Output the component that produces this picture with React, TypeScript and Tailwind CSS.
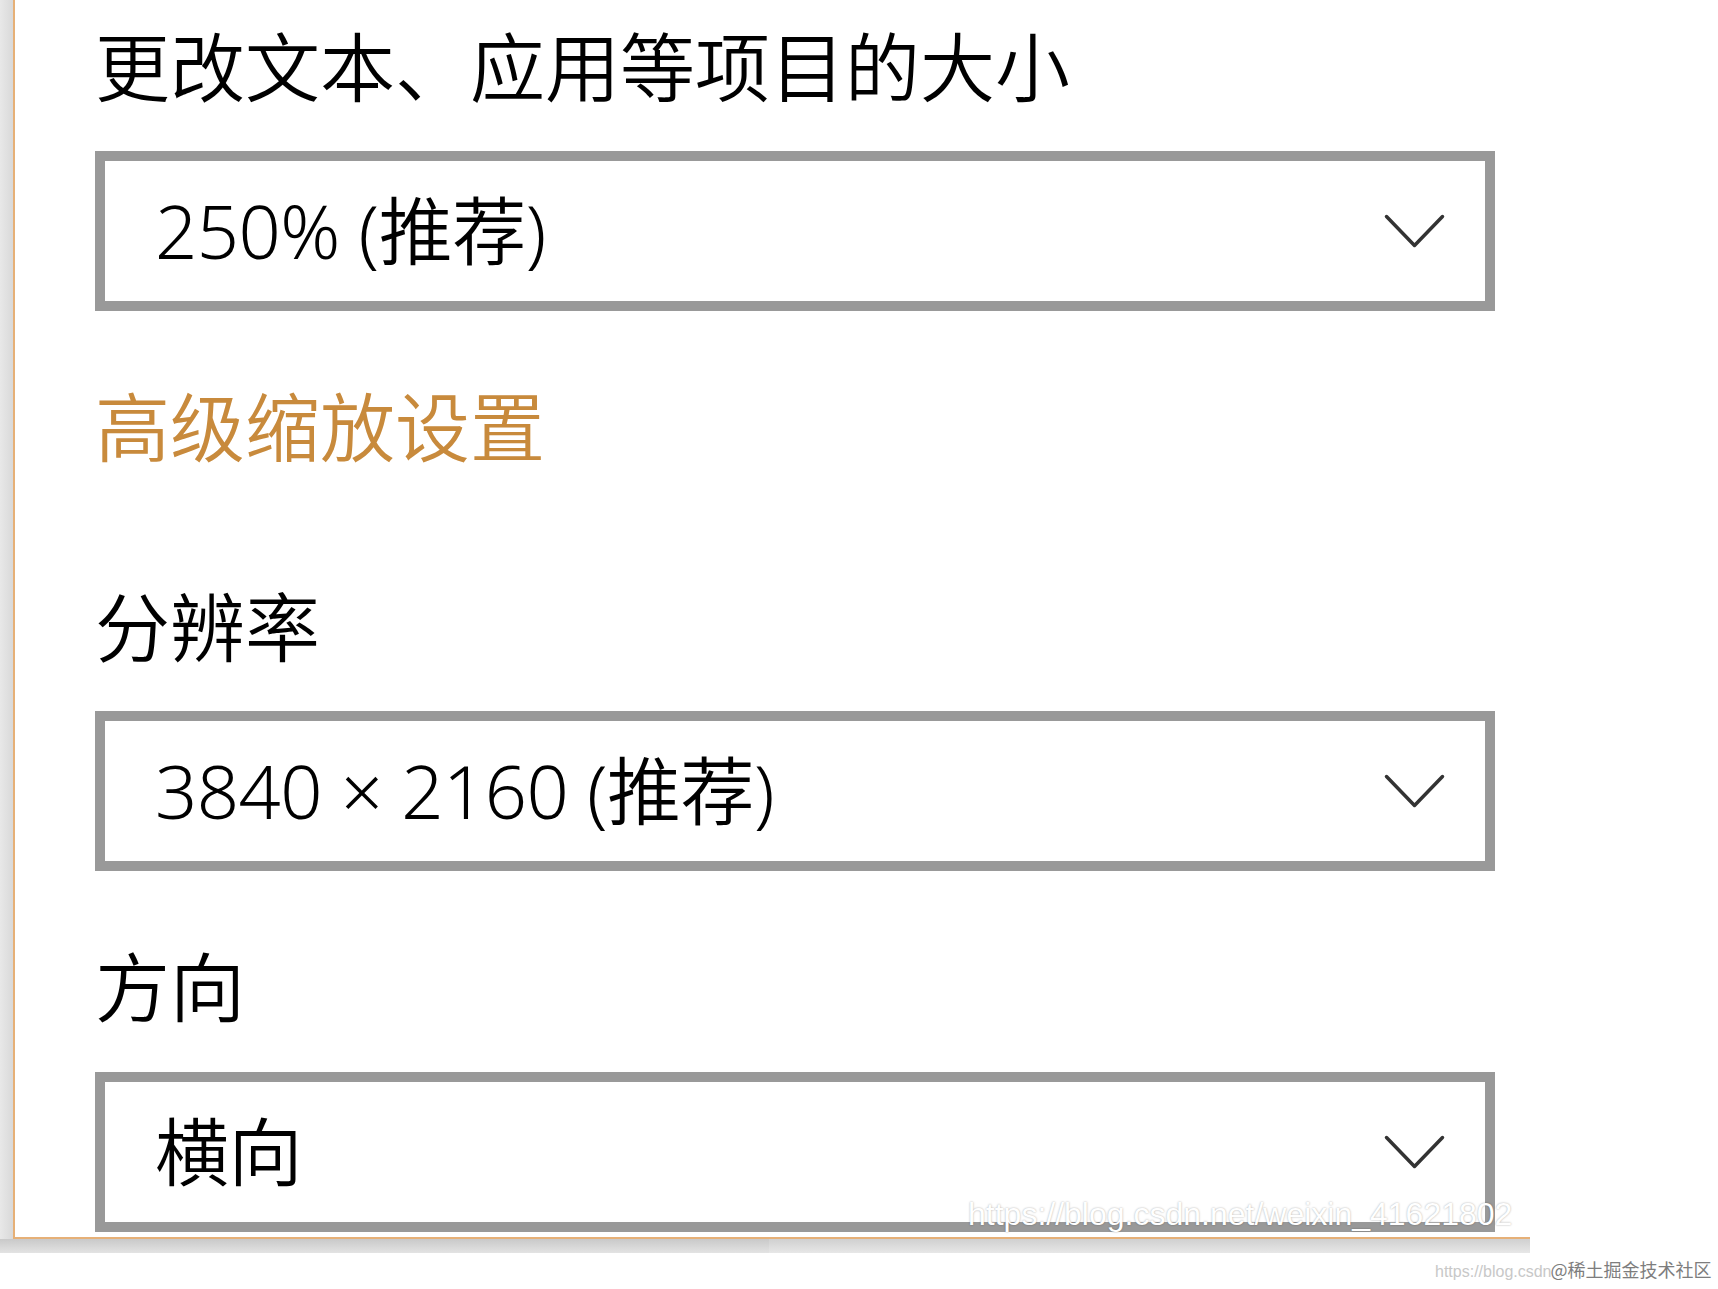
import React from "react";

const options = [
  { label: "更改文本、应用等项目的大小", value: "250% (推荐)" },
  { label: "分辨率", value: "3840 × 2160 (推荐)" },
  { label: "方向", value: "横向" },
];

function Chevron() {
  return (
    <svg width="61" height="34" viewBox="0 0 61 34" fill="none">
      <polyline
        points="2.5,2.5 30.5,31.5 58.5,2.5"
        stroke="#333333"
        strokeWidth="3.5"
        strokeLinecap="round"
        strokeLinejoin="round"
      />
    </svg>
  );
}

function Dropdown({ value, className = "" }: { value: string; className?: string }) {
  return (
    <div
      className={`flex h-[160px] w-[1400px] items-center justify-between border-[10px] border-[#999999] bg-white pl-[50px] pr-[40px] ${className}`}
    >
      <span className="text-[74px] leading-[74px] font-[350] tracking-[-0.5px] text-black">{value}</span>
      <Chevron />
    </div>
  );
}

export default function App() {
  return (
    <div
      className="relative h-[1289px] w-full bg-white"
      style={{ fontFamily: '"Noto Sans", "Noto Sans CJK SC", sans-serif' }}
    >
      <div className="w-[1530px]">
        <div className="flex h-[1239px]">
          {/* shadow strip on the left */}
          <div className="w-[13px] bg-gradient-to-r from-[#e8e8e8] to-[#d9d9d9]" />
          <div className="flex flex-1 flex-col border-b-2 border-l-2 border-[#e6b077] bg-white pl-[80px] pt-[30px]">
            <h2 className="text-[75px] leading-[75px] font-[350] text-black">{options[0].label}</h2>
            <Dropdown value={options[0].value} className="mt-[46px]" />

            <a className="mt-[79px] text-[75px] leading-[75px] font-[350] text-[#c88a3c]">高级缩放设置</a>

            <h2 className="mt-[125px] text-[75px] leading-[75px] font-[350] text-black">{options[1].label}</h2>
            <Dropdown value={options[1].value} className="mt-[46px]" />

            <h2 className="mt-[79px] text-[75px] leading-[75px] font-[350] text-black">{options[2].label}</h2>
            <Dropdown value={options[2].value} className="mt-[47px]" />
          </div>
        </div>
        {/* bottom shadow */}
        <div className="flex h-[14px]">
          <div className="w-[769px] bg-gradient-to-b from-[#c9c9c9] to-[#e3e3e3]" />
          <div className="flex-1 bg-gradient-to-b from-[#d0d0d0] to-[#e7e7e7]" />
        </div>
      </div>

      {/* watermark over the last dropdown */}
      <div
        className="absolute left-[968px] top-[1198px] text-[32px] leading-[32px] text-white [text-shadow:0_0_2px_rgba(0,0,0,0.35)]"
        style={{ fontFamily: '"Liberation Sans", Arial, sans-serif' }}
      >
        https://blog.csdn.net/weixin_41621802
      </div>

      {/* site watermark bottom right */}
      <div className="absolute left-[1435px] top-[1259px] flex items-baseline whitespace-nowrap">
        <span
          className="text-[16px] leading-[20px] text-[#c8c8c8]"
          style={{ fontFamily: '"Liberation Sans", Arial, sans-serif' }}
        >
          https://blog.csdn
        </span>
        <span
          className="-ml-[1px] text-[18px] leading-[20px] text-[#7d7d7d]"
          style={{ fontFamily: '"Noto Sans CJK SC", sans-serif' }}
        >
          @稀土掘金技术社区
        </span>
      </div>
    </div>
  );
}
